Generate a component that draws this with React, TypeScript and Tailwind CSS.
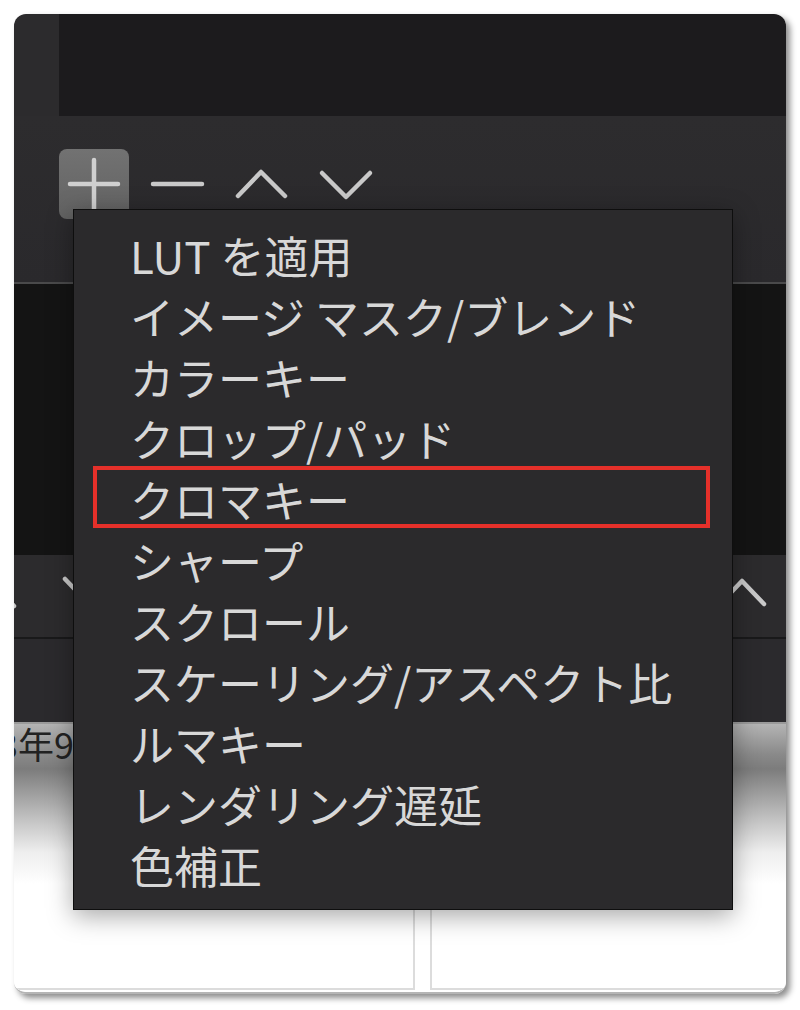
import React from 'react';

const stroke = '#c9c9c9';

const Icon = ({ d, className = '' }: { d: string; className?: string }) => (
  <svg viewBox="0 0 50 50" className={className} fill="none" stroke={stroke} strokeWidth={4.5} strokeLinecap="round" strokeLinejoin="round">
    <path d={d} />
  </svg>
);

const items = [
  'LUT を適用',
  'イメージ マスク/ブレンド',
  'カラーキー',
  'クロップ/パッド',
  'クロマキー',
  'シャープ',
  'スクロール',
  'スケーリング/アスペクト比',
  'ルマキー',
  'レンダリング遅延',
  '色補正',
];

const App = () => {
  return (
    <div className="relative w-[800px] h-[1010px] bg-white pt-[14px] pl-[14px] overflow-hidden" style={{ fontFamily: '"Noto Sans CJK JP", "Noto Sans", sans-serif' }}>
      {/* window */}
      <div className="w-[772px] h-[980px] rounded-[12px] overflow-hidden flex flex-col shadow-[4px_4px_6px_rgba(0,0,0,0.45)] border-b-[2px] border-[#b5b5b5]">
        <div className="h-[102px] flex">
          <div className="w-[45px] bg-[#2c2b2d]" />
          <div className="flex-1 bg-[#1c1b1d]" />
        </div>

        <div className="h-[166px] bg-gradient-to-b from-[#2d2c2e] to-[#2a292c] pl-[45px] pt-[33px]">
          <div className="flex gap-[14px]">
            <div className="w-[70px] h-[70px] rounded-[8px] bg-gradient-to-b from-[#727272] to-[#626262] overflow-hidden">
              <svg viewBox="0 0 70 70" className="w-[70px] h-[70px]" fill="none" stroke="#d0d0d0" strokeWidth={4.5} strokeLinecap="round">
                <path d="M11 35H59M35 11V70" />
              </svg>
            </div>
            <div className="w-[70px] h-[70px]">
              <svg viewBox="0 0 70 70" className="w-[70px] h-[70px]" fill="none" stroke={stroke} strokeWidth={4.5} strokeLinecap="round">
                <path d="M10 35H59" />
              </svg>
            </div>
            <div className="w-[70px] h-[70px]">
              <svg viewBox="0 0 70 70" className="w-[70px] h-[70px]" fill="none" stroke={stroke} strokeWidth={4.5} strokeLinecap="round" strokeLinejoin="round">
                <path d="M11 47L34 23L58 47" />
              </svg>
            </div>
            <div className="w-[70px] h-[70px]">
              <svg viewBox="0 0 70 70" className="w-[70px] h-[70px]" fill="none" stroke={stroke} strokeWidth={4.5} strokeLinecap="round" strokeLinejoin="round">
                <path d="M11 24L35 48L59 24" />
              </svg>
            </div>
          </div>
        </div>

        <div className="h-[2px] bg-[#4a4a4b]" />
        <div className="h-[271px] bg-[#141414]" />

        <div className="h-[82px] bg-[#2c2b2d] flex justify-between items-start pt-[21px] pr-[19px]">
          <div className="flex gap-[45px] ml-[-47px]">
            <Icon d="M3 30L25 7L47 30" className="w-[50px] h-[50px]" />
            <Icon d="M3 3L25 26L47 3" className="w-[50px] h-[50px]" />
          </div>
          <Icon d="M3 28L25 5L47 28" className="w-[50px] h-[50px]" />
        </div>
        <div className="h-[2px] bg-[#19191a]" />
        <div className="h-[83px] bg-[#2b2a2d]" />
        <div className="h-[2px] bg-[#9a9a9a]" />

        <div className="flex-1 relative bg-[linear-gradient(to_bottom,#b4b4b4_0px,#8a8a8a_30px,#7c7c7c_45px,#c2c2c2_95px,#eeeeee_128px,#ffffff_160px)]">
          <div className="ml-[-76px] text-[36px] leading-[38px] text-[#222] whitespace-nowrap">2023年9月</div>
          <div className="absolute left-0 right-0 bottom-[2px] top-[38px] flex gap-[15px]">
            <div className="w-[401px] h-full border-r-[2px] border-b-[2px] border-[#dcdcdc]" />
            <div className="flex-1 h-full border-l-[2px] border-b-[2px] border-[#dcdcdc]" />
          </div>
        </div>
      </div>

      {/* popup menu */}
      <div className="absolute left-[73px] top-[209px] w-[660px] h-[701px] bg-[#2b2a2c] border border-[#0e0e0e] pt-[15px] shadow-[0_6px_24px_rgba(0,0,0,0.35)]">
        {items.map((label) => (
          <div key={label} className="relative h-[61px] pl-[56px] text-[44px] leading-[61px] text-[#d8d8d8] whitespace-nowrap">
            {label}
            {label === 'クロマキー' && (
              <div className="absolute left-[19px] right-[22px] top-[-3px] bottom-[2px] border-[4px] border-[#e5302a]" />
            )}
          </div>
        ))}
      </div>
    </div>
  );
};

export default App;
